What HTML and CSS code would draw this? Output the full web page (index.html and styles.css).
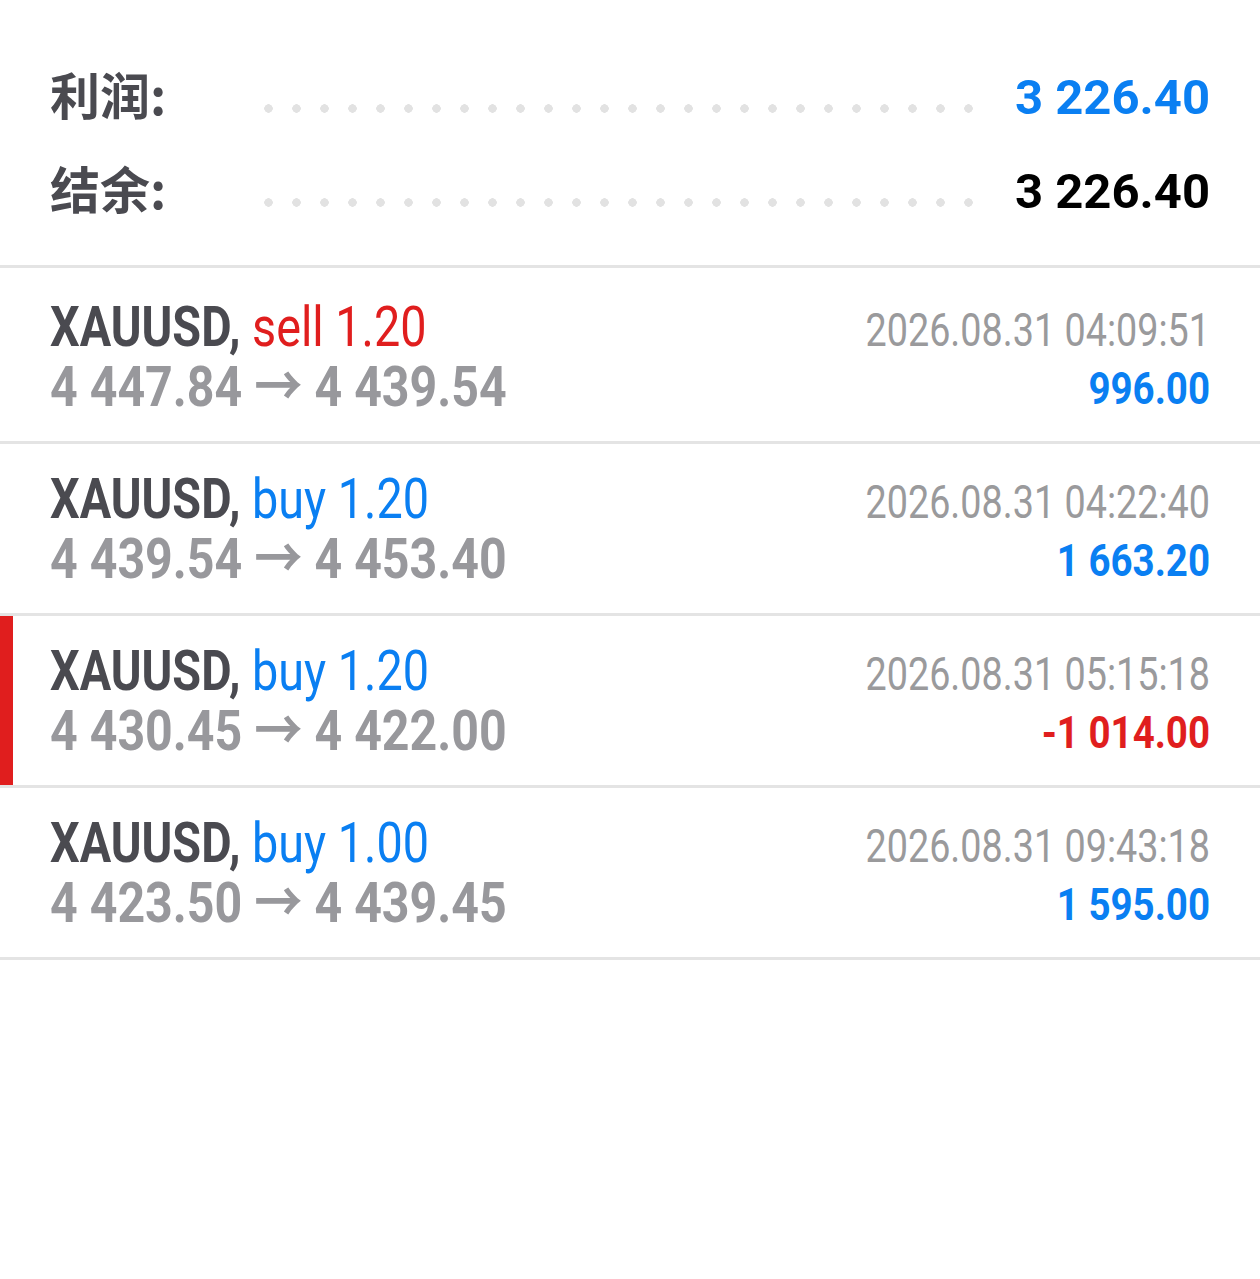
FILE: index.html
```html
<!DOCTYPE html>
<html lang="zh-CN">
<head>
  <meta charset="UTF-8">
  <meta name="viewport" content="width=device-width, initial-scale=1.0">
  <title>交易历史</title>
  <link rel="stylesheet" href="styles.css">
</head>
<body>
  <div class="summary">
    <div class="sum-row">
      <span class="sum-label">利润:</span>
      <span class="dots"></span>
      <span class="sum-value blue">3 226.40</span>
    </div>
    <div class="sum-row">
      <span class="sum-label">结余:</span>
      <span class="dots"></span>
      <span class="sum-value black">3 226.40</span>
    </div>
  </div>

  <div class="trades">
    <div class="trade">
      <div class="trade-left">
        <div class="title"><b>XAUUSD,</b> <span class="red">sell 1.20</span></div>
        <div class="prices">4 447.84 → 4 439.54</div>
      </div>
      <div class="trade-right">
        <div class="time">2026.08.31 04:09:51</div>
        <div class="profit blue">996.00</div>
      </div>
    </div>
    <div class="trade">
      <div class="trade-left">
        <div class="title"><b>XAUUSD,</b> <span class="blue">buy 1.20</span></div>
        <div class="prices">4 439.54 → 4 453.40</div>
      </div>
      <div class="trade-right">
        <div class="time">2026.08.31 04:22:40</div>
        <div class="profit blue">1 663.20</div>
      </div>
    </div>
    <div class="trade marked">
      <div class="trade-left">
        <div class="title"><b>XAUUSD,</b> <span class="blue">buy 1.20</span></div>
        <div class="prices">4 430.45 → 4 422.00</div>
      </div>
      <div class="trade-right">
        <div class="time">2026.08.31 05:15:18</div>
        <div class="profit red">-1 014.00</div>
      </div>
    </div>
    <div class="trade">
      <div class="trade-left">
        <div class="title"><b>XAUUSD,</b> <span class="blue">buy 1.00</span></div>
        <div class="prices">4 423.50 → 4 439.45</div>
      </div>
      <div class="trade-right">
        <div class="time">2026.08.31 09:43:18</div>
        <div class="profit blue">1 595.00</div>
      </div>
    </div>
  </div>
</body>
</html>
```

FILE: styles.css
```css
*, *::before, *::after {
  padding: 0;
  margin: 0;
  box-sizing: border-box;
}

body {
  background: #fff;
  font-family: Roboto, "Noto Sans CJK SC", sans-serif;
  color: #4a4a50;
}

.blue { color: #0a7ff2; }
.red { color: #e01e1e; }
.black { color: #000; }

/* summary block */
.summary {
  padding: 48px 50px 29px 50px;
  border-bottom: 3px solid #e4e4e4;
}

.sum-row {
  display: flex;
  align-items: center;
  height: 94px;
}

.sum-label {
  flex: none;
  width: 214px;
  margin-bottom: 4px;
  font-family: "Noto Sans CJK SC", sans-serif;
  font-weight: 700;
  font-size: 50px;
  color: #4a4a50;
}

.dots {
  flex: 1;
  height: 9px;
  margin-top: 26px;
  margin-right: 40px;
  background-image: radial-gradient(circle at 4.5px 4.5px, #e2e2e2 4px, transparent 4.5px);
  background-size: 28px 9px;
  background-repeat: repeat-x;
}

.sum-value {
  flex: none;
  margin-top: 6px;
  font-size: 49px;
  font-weight: 700;
  line-height: 60px;
  white-space: nowrap;
}

/* trades list */
.trade {
  display: flex;
  justify-content: space-between;
  padding: 25px 50px 24px 50px;
  border-bottom: 3px solid #e4e4e4;
}

.trade:first-child {
  padding-top: 29px;
}

.trade.marked {
  box-shadow: inset 13px 0 #e01e1e;
}

.trade-left,
.trade-right {
  white-space: nowrap;
}

.trade-right {
  text-align: right;
}

.title {
  font-size: 56px;
  line-height: 60px;
  transform: scaleX(0.835);
  transform-origin: left center;
}

.title b {
  font-weight: 700;
  color: #4a4a50;
}

.prices {
  font-size: 56px;
  line-height: 60px;
  font-weight: 700;
  color: #98989c;
  transform: scaleX(0.862);
  transform-origin: left center;
}

.time {
  font-size: 47px;
  line-height: 60px;
  padding-top: 3px;
  color: #9a9a9c;
  transform: scaleX(0.803);
  transform-origin: right center;
}

.profit {
  font-size: 45px;
  line-height: 57px;
  font-weight: 700;
  transform: scaleX(0.855);
  transform-origin: right center;
}
```
